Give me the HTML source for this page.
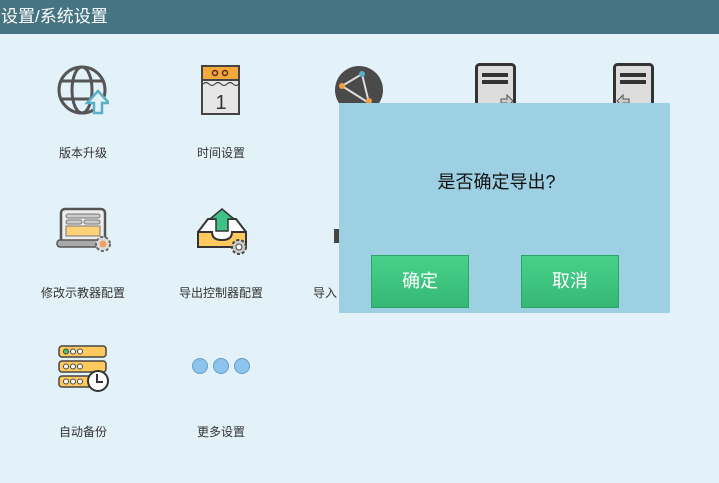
<!DOCTYPE html>
<html><head><meta charset="utf-8"><style>
*{margin:0;padding:0;box-sizing:border-box}
body{width:719px;height:483px;background:#e3f2f8;font-family:"Liberation Sans","Noto Sans CJK SC",sans-serif;position:relative;overflow:hidden}
.hd{position:absolute;left:0;top:0;width:719px;height:34px;background:#467482;color:#fff;font-size:17px;line-height:34px;padding-left:1px}
.lb{position:absolute;font-size:12px;color:#333;width:140px;text-align:center}
.ic{position:absolute}
.dlg{position:absolute;left:339px;top:103px;width:331px;height:210px;background:#9dd0e2}
.q{position:absolute;left:-8px;width:331px;top:65px;text-align:center;font-size:18px;color:#111}
.btn{position:absolute;top:152px;width:98px;height:53px;background:linear-gradient(#48d18a,#35b874);border:1px solid #2ea566;color:#fff;font-size:18px;line-height:51px;text-align:center}
</style></head><body>
<div class="hd">设置/系统设置</div>

<svg class="ic" style="left:57px;top:65px" width="52" height="52" viewBox="0 0 52 52">
<g fill="none" stroke="#555" stroke-width="3"><circle cx="25" cy="25" r="23"/><ellipse cx="25" cy="25" rx="10" ry="23"/><path d="M4 16h42M4 34h42"/></g>
<path d="M37 48V38h-7l11-12 11 12h-7v10z" fill="#e3f2f8" stroke="#5ab0c8" stroke-width="2.5"/>
</svg>
<div class="lb" style="left:13px;top:144px">版本升级</div>

<svg class="ic" style="left:201px;top:65px" width="40" height="50" viewBox="0 0 40 50">
<rect x="1" y="1" width="37" height="48" fill="#e6e6e6" stroke="#444" stroke-width="2"/>
<rect x="1" y="1" width="37" height="14" fill="#f5a93a" stroke="#444" stroke-width="2"/>
<circle cx="14" cy="8" r="2.5" fill="none" stroke="#5a2b10" stroke-width="1.5"/><circle cx="24" cy="8" r="2.5" fill="none" stroke="#5a2b10" stroke-width="1.5"/>
<path d="M2 19q3-3 6 0t6 0 6 0 6 0 6 0 6 0" fill="none" stroke="#444" stroke-width="1.2"/>
<text x="20" y="44" text-anchor="middle" font-size="20" fill="#333" font-family="Liberation Sans">1</text>
</svg>
<div class="lb" style="left:151px;top:144px">时间设置</div>

<svg class="ic" style="left:334px;top:65px" width="50" height="40" viewBox="0 0 50 40">
<circle cx="25" cy="25" r="24" fill="#4a4a4a"/>
<path d="M8 21L28 9 35 38M8 21l27 17" stroke="#ddd" stroke-width="2" fill="none"/>
<circle cx="8" cy="21" r="3" fill="#f0a040"/><circle cx="28" cy="9" r="3" fill="#5ab0c8"/><circle cx="35" cy="36" r="3" fill="#f0a040"/>
</svg>

<svg class="ic" style="left:475px;top:63px" width="42" height="40" viewBox="0 0 42 40">
<rect x="1.5" y="1.5" width="38" height="45" rx="3" fill="#ddd" stroke="#333" stroke-width="3"/>
<rect x="7" y="10" width="26" height="4" fill="#333"/><rect x="7" y="17" width="26" height="4" fill="#333"/>
<path d="M26 36h6v-4l6 6-6 6v-4h-6z" fill="#ccc" stroke="#555"/>
</svg>
<svg class="ic" style="left:613px;top:63px" width="42" height="40" viewBox="0 0 42 40">
<rect x="1.5" y="1.5" width="38" height="45" rx="3" fill="#ddd" stroke="#333" stroke-width="3"/>
<rect x="7" y="10" width="26" height="4" fill="#333"/><rect x="7" y="17" width="26" height="4" fill="#333"/>
<path d="M16 36h-6v-4l-6 6 6 6v-4h6z" fill="#ccc" stroke="#555"/>
</svg>

<svg class="ic" style="left:56px;top:207px" width="58" height="46" viewBox="0 0 58 46">
<rect x="5" y="2" width="44" height="34" rx="4" fill="#eee" stroke="#555" stroke-width="2.5"/>
<rect x="10" y="7" width="34" height="4" rx="2" fill="#ccc" stroke="#777"/>
<rect x="10" y="13" width="16" height="4" rx="2" fill="#ccc" stroke="#777"/><rect x="28" y="13" width="16" height="4" rx="2" fill="#ccc" stroke="#777"/>
<rect x="10" y="19" width="34" height="10" fill="#ffd27a" stroke="#777"/>
<rect x="1" y="33" width="50" height="7" rx="3" fill="#aaa" stroke="#555" stroke-width="1.5"/>
<circle cx="47" cy="37" r="7" fill="#ddd" stroke="#666" stroke-width="2" stroke-dasharray="3 2"/><circle cx="47" cy="37" r="3.5" fill="#f0a060"/>
</svg>
<div class="lb" style="left:13px;top:284px">修改示教器配置</div>

<svg class="ic" style="left:196px;top:207px" width="54" height="50" viewBox="0 0 54 50">
<path d="M2 25L12 12h28l10 13v15H2z" fill="#fff" stroke="#333" stroke-width="2"/>
<path d="M2 25h14q0 8 10 8t10-8h14v15H2z" fill="#ffc95e" stroke="#333" stroke-width="2"/>
<path d="M20 24V12h-6l12-10 12 10h-6v12z" fill="#3ec285" stroke="#333" stroke-width="1.5"/>
<circle cx="43" cy="40" r="7" fill="#ccc" stroke="#444" stroke-width="2" stroke-dasharray="3 2"/><circle cx="43" cy="40" r="3" fill="#fff" stroke="#444"/>
</svg>
<div class="lb" style="left:151px;top:284px">导出控制器配置</div>
<svg class="ic" style="left:334px;top:225px" width="6" height="20"><rect x="0" y="4" width="5" height="14" fill="#444"/></svg>
<div class="lb" style="left:313px;top:284px;width:30px;text-align:left">导入</div>

<svg class="ic" style="left:58px;top:345px" width="52" height="48" viewBox="0 0 52 48">
<rect x="1" y="1" width="47" height="11" rx="3" fill="#ffc95e" stroke="#444" stroke-width="1.5"/>
<rect x="1" y="16" width="47" height="11" rx="3" fill="#ffc95e" stroke="#444" stroke-width="1.5"/>
<rect x="1" y="31" width="47" height="11" rx="3" fill="#ffc95e" stroke="#444" stroke-width="1.5"/>
<g stroke="#444" fill="#fff"><circle cx="8" cy="6.5" r="2.5" fill="#3ec285"/><circle cx="15" cy="6.5" r="2.5"/><circle cx="22" cy="6.5" r="2.5"/>
<circle cx="8" cy="21.5" r="2.5"/><circle cx="15" cy="21.5" r="2.5"/><circle cx="22" cy="21.5" r="2.5"/>
<circle cx="8" cy="36.5" r="2.5"/><circle cx="15" cy="36.5" r="2.5"/><circle cx="22" cy="36.5" r="2.5"/></g>
<circle cx="40" cy="36" r="10" fill="#fff" stroke="#333" stroke-width="2"/><path d="M39 29v8h6" fill="none" stroke="#333" stroke-width="2"/>
</svg>
<div class="lb" style="left:13px;top:423px">自动备份</div>

<svg class="ic" style="left:191px;top:357px" width="60" height="18" viewBox="0 0 60 18">
<g fill="#8cc4f0" stroke="#6a9cc0"><circle cx="9" cy="9" r="7.5"/><circle cx="30" cy="9" r="7.5"/><circle cx="51" cy="9" r="7.5"/></g>
</svg>
<div class="lb" style="left:151px;top:423px">更多设置</div>

<div class="dlg">
<div class="q">是否确定导出?</div>
<div class="btn" style="left:32px">确定</div>
<div class="btn" style="left:182px">取消</div>
</div>
</body></html>
